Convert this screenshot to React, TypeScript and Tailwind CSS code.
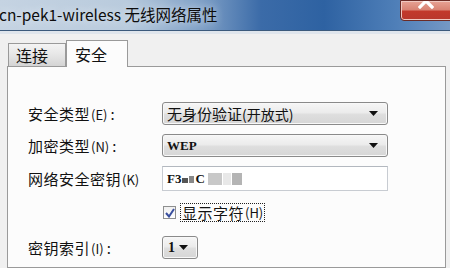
import React, { useState } from 'react';

const cjk = "font-['Noto_Sans_CJK_SC','Noto_Sans',sans-serif]";

const Arrow: React.FC = () => (
  <svg width="9" height="5" viewBox="0 0 9 5" className="shrink-0">
    <path d="M0 0 H9 L4.5 5 Z" fill="#111" />
  </svg>
);

const Combo: React.FC<{ children: React.ReactNode; className?: string }> = ({ children, className }) => (
  <div
    className={`flex items-center justify-between h-[23px] pl-[4px] pr-[9px] rounded-[3px] border border-[#8a8a8a] bg-[linear-gradient(180deg,#f6f6f6_0%,#ececec_45%,#dedede_55%,#d6d6d6_100%)] shadow-[inset_0_0_0_1px_#f8f8f8] ${className ?? ''}`}
  >
    {children}
    <Arrow />
  </div>
);

const Label: React.FC<{ text: string; keyChar: string; colon?: boolean }> = ({ text, keyChar, colon = true }) => (
  <div className={`${cjk} text-[15px] leading-none text-[#111] tracking-[0.5px]`}>
    {text}
    <span className="text-[13px] tracking-[0px] ml-[1px]">({keyChar})</span>
    {colon && <span className="ml-[3px]">:</span>}
  </div>
);

export default function App() {
  const [show, setShow] = useState(true);

  return (
    <div className="w-[450px] h-[268px] overflow-hidden bg-[#f0f0f0] flex flex-col relative">
      {/* title bar */}
      <div className="h-[30px] shrink-0 bg-[linear-gradient(90deg,#c5d3e2_0%,#b9cbdd_28%,#7e9fc6_45%,#3b6ba8_58%,#2e62a2_72%,#4f7fb8_88%,#7598c4_100%)] flex items-center">
        <span className={`${cjk} text-[15.5px] leading-none text-[#0d0d0d] -ml-[1px] [text-shadow:0_0_8px_#e8eef5]`}>
          cn-pek1-wireless 无线网络属性
        </span>
      </div>
      <div className="h-[1px] bg-[#3c5a7c] shrink-0" />
      <div className="h-[3px] bg-[#dfe5ec] shrink-0" />

      {/* close button */}
      <div className="absolute top-0 left-[400px] w-[52px] h-[21px] border border-[#6b2b25] rounded-bl-[4px] shadow-[inset_0_0_0_1px_#f0c8c0] bg-[linear-gradient(180deg,#e7a395_0%,#d98474_45%,#c2392b_55%,#b8382c_100%)] flex justify-center overflow-hidden">
        <svg width="16" height="16" viewBox="0 0 16 16" className="-mt-[8px]">
          <path d="M2 2 L14 14 M14 2 L2 14" stroke="#fff" strokeWidth="3.2" strokeLinecap="square" />
        </svg>
      </div>

      {/* tabs */}
      <div className="flex items-end pl-[8px] pt-[6px] shrink-0">
        <div className={`${cjk} w-[58px] h-[23px] border border-b-0 border-[#9a9a9a] bg-[linear-gradient(180deg,#f4f4f4_0%,#e6e6e6_50%,#d4d4d4_100%)] text-[16px] leading-none flex items-center pl-[7px] text-[#111]`}>
          连接
        </div>
        <div className={`${cjk} w-[62px] h-[27px] -mb-[1px] border border-b-0 border-[#9a9a9a] bg-[#fcfcfc] text-[16px] leading-none flex items-start pt-[5px] pl-[8px] text-[#111] relative z-10`}>
          安全
        </div>
      </div>

      {/* panel */}
      <div className="ml-[7px] mr-[4px] flex-1 border border-[#9a9a9a] bg-[#fcfcfc] pl-[20px] pt-[35px]">
        <div className="grid grid-cols-[134px_226px] items-center">
          <Label text="安全类型" keyChar="E" />
          <Combo>
            <span className={`${cjk} text-[15px] leading-none text-[#111]`}>无身份验证<span className="text-[14px]">(开放式)</span></span>
          </Combo>

          <div className="col-span-2 h-[9px]" />

          <Label text="加密类型" keyChar="N" />
          <Combo>
            <span className="font-['Liberation_Serif',serif] font-bold text-[13px] leading-none text-[#111]">WEP</span>
          </Combo>

          <div className="col-span-2 h-[9px]" />

          <Label text="网络安全密钥" keyChar="K" colon={false} />
          <div className="h-[25px] border border-[#c8ccd2] border-t-[#b3b8bf] bg-white flex items-center pl-[4px] gap-[1px]">
            <span className="font-['Liberation_Serif',serif] font-bold text-[13px] leading-none text-[#111]">F3</span>
            <span className="w-[6px] h-[5px] bg-[#555] mt-[3px]" />
            <span className="w-[5px] h-[7px] bg-[#888] mt-[2px]" />
            <span className="font-['Liberation_Serif',serif] font-bold text-[13px] leading-none text-[#111]">C</span>
            <span className="w-[14px] h-[12px] bg-[#c8c8c8] ml-[2px]" />
            <span className="w-[8px] h-[12px] bg-[#e8e8e8]" />
            <span className="w-[10px] h-[12px] bg-[#b4b4b4]" />
          </div>

          <div className="col-span-2 h-[12px]" />

          <div />
          <div className="flex items-center h-[19px]">
            <button
              type="button"
              onClick={() => setShow(!show)}
              className="w-[13px] h-[13px] border border-[#8e8f8f] bg-[linear-gradient(180deg,#f0f0f0,#ffffff)] flex items-center justify-center ml-[1px]"
            >
              {show && (
                <svg width="10" height="10" viewBox="0 0 10 10">
                  <path d="M1 5 L4 8.5 L9 1" stroke="#3a4f9e" strokeWidth="2" fill="none" />
                </svg>
              )}
            </button>
            <div className={`${cjk} ml-[4px] h-[19px] px-[1px] border border-dotted border-[#222] text-[15px] leading-none flex items-center text-[#111] tracking-[0.5px]`}>
              显示字符<span className="text-[13px] tracking-[0px] ml-[1px]">(H)</span>
            </div>
          </div>

          <div className="col-span-2 h-[14px]" />

          <Label text="密钥索引" keyChar="I" />
          <Combo className="w-[36px] pl-[5px] pr-[6px]">
            <span className="font-['Liberation_Serif',serif] font-bold text-[14px] leading-none text-[#111]">1</span>
          </Combo>
        </div>
      </div>
    </div>
  );
}
